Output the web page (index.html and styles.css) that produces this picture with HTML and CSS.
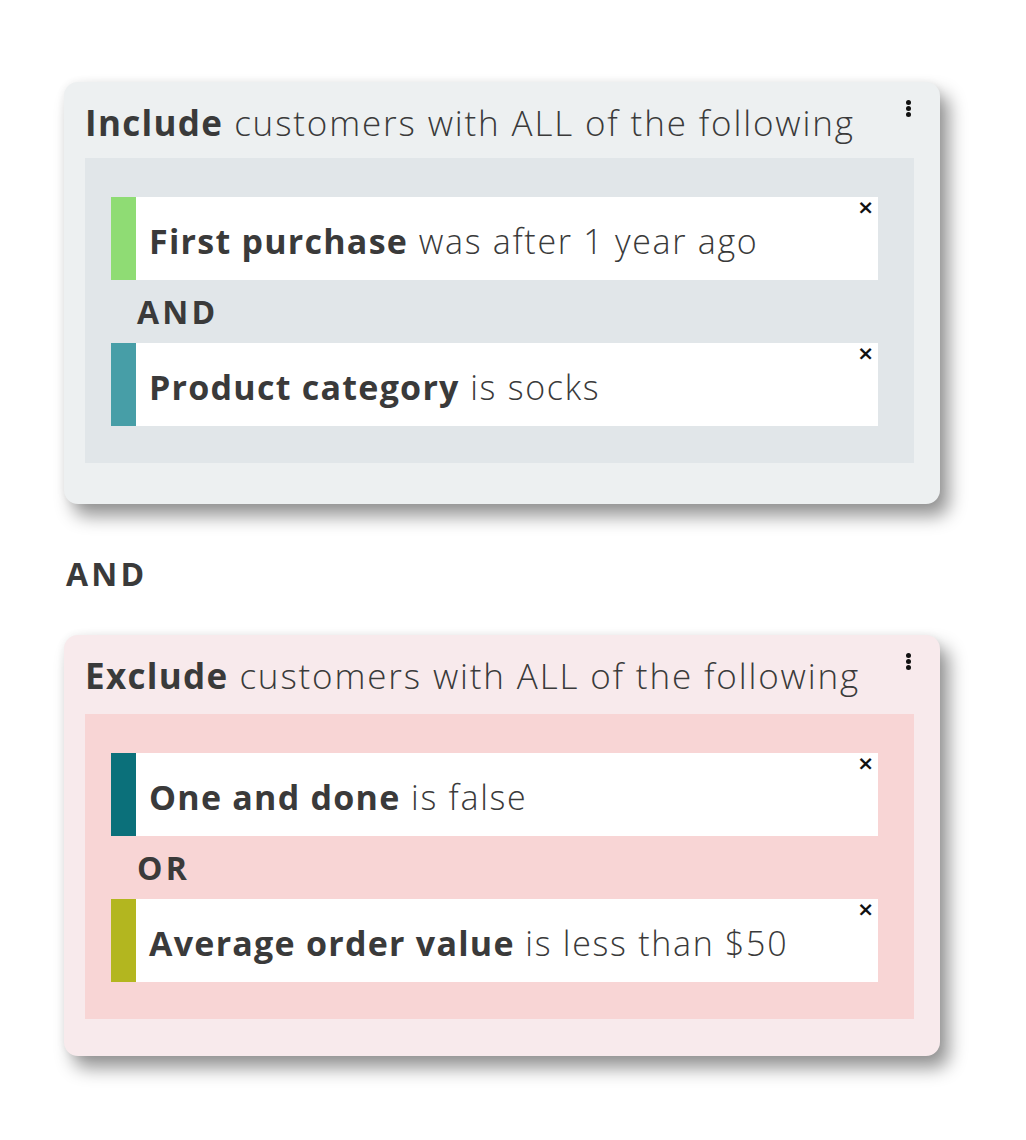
FILE: index.html
```html
<!DOCTYPE html>
<html>
<head>
<meta charset="utf-8">
<link rel="stylesheet" href="styles.css">
</head>
<body>
<div class="page">
  <section class="card card-include">
    <div class="card-head">
      <h2 class="title"><b>Include</b> customers with ALL of the following</h2>
      <span class="kebab"><i></i><i></i><i></i></span>
    </div>
    <div class="group">
      <div class="rule"><span class="stripe s-green"></span><span class="rule-text"><b>First purchase</b> was after 1 year ago</span><span class="close">×</span></div>
      <div class="joiner">AND</div>
      <div class="rule"><span class="stripe s-teal"></span><span class="rule-text"><b>Product category</b> is socks</span><span class="close">×</span></div>
    </div>
  </section>

  <div class="outer-joiner">AND</div>

  <section class="card card-exclude">
    <div class="card-head">
      <h2 class="title"><b>Exclude</b> customers with ALL of the following</h2>
      <span class="kebab"><i></i><i></i><i></i></span>
    </div>
    <div class="group">
      <div class="rule"><span class="stripe s-petrol"></span><span class="rule-text"><b>One and done</b> is false</span><span class="close">×</span></div>
      <div class="joiner">OR</div>
      <div class="rule"><span class="stripe s-olive"></span><span class="rule-text"><b>Average order value</b> is less than $50</span><span class="close">×</span></div>
    </div>
  </section>
</div>
</body>
</html>
```

FILE: styles.css
```css
html, body {
  margin: 0;
  padding: 0;
  background: #ffffff;
}
body {
  font-family: "Open Sans", "DejaVu Sans", sans-serif;
  color: #3a3a3a;
}
.page {
  padding: 82px 0 84px 64px;
  width: 876px;
}
.card {
  position: relative;
  border-radius: 14px;
  padding: 0 26px 41px 21px;
  box-shadow: 9px 12px 18px rgba(0, 0, 0, 0.42), 0 0 8px rgba(0, 0, 0, 0.06);
}
.card-include { background: #edf0f1; }
.card-exclude { background: #f8eaec; padding-bottom: 37px; }
.card-include .group { background: #e1e6e9; }
.card-exclude .group { background: #f8d5d5; }
.card-head {
  height: 76px;
  display: flex;
  align-items: flex-start;
}
.card-exclude .card-head { height: 79px; }
.title {
  margin: 0;
  padding-top: 18px;
  font-size: 35px;
  font-weight: 300;
  line-height: 46px;
  letter-spacing: 1.85px;
  white-space: nowrap;
}
.title b { font-weight: 700; letter-spacing: 1.3px; }
.rule-text b { font-weight: 700; letter-spacing: 1.25px; }
.kebab {
  position: absolute;
  top: 18px;
  right: 29px;
  display: flex;
  flex-direction: column;
  gap: 1px;
}
.kebab i {
  display: block;
  width: 5px;
  height: 5px;
  border-radius: 50%;
  background: #111;
}
.group {
  padding: 39px 36px 37px 26px;
}
.rule {
  position: relative;
  display: flex;
  height: 83px;
  background: #ffffff;
  align-items: center;
}
.stripe {
  width: 25px;
  align-self: stretch;
  flex: none;
}
.s-green { background: #8fdc74; }
.s-teal { background: #479ea7; }
.s-petrol { background: #0b707a; }
.s-olive { background: #b3b61f; }
.rule-text {
  padding: 5px 0 0 13px;
  font-size: 34px;
  font-weight: 300;
  letter-spacing: 1.7px;
  white-space: nowrap;
}
.close {
  position: absolute;
  top: -2px;
  right: 4px;
  font-size: 20px;
  font-weight: 700;
  color: #111;
  font-family: "DejaVu Sans", sans-serif;
}
.joiner {
  height: 63px;
  padding-left: 26px;
  font-size: 32px;
  font-weight: 700;
  line-height: 63px;
  letter-spacing: 3.2px;
}
.outer-joiner {
  height: 131px;
  padding-left: 2px;
  font-size: 32px;
  font-weight: 700;
  line-height: 139px;
  letter-spacing: 3.2px;
}
```
